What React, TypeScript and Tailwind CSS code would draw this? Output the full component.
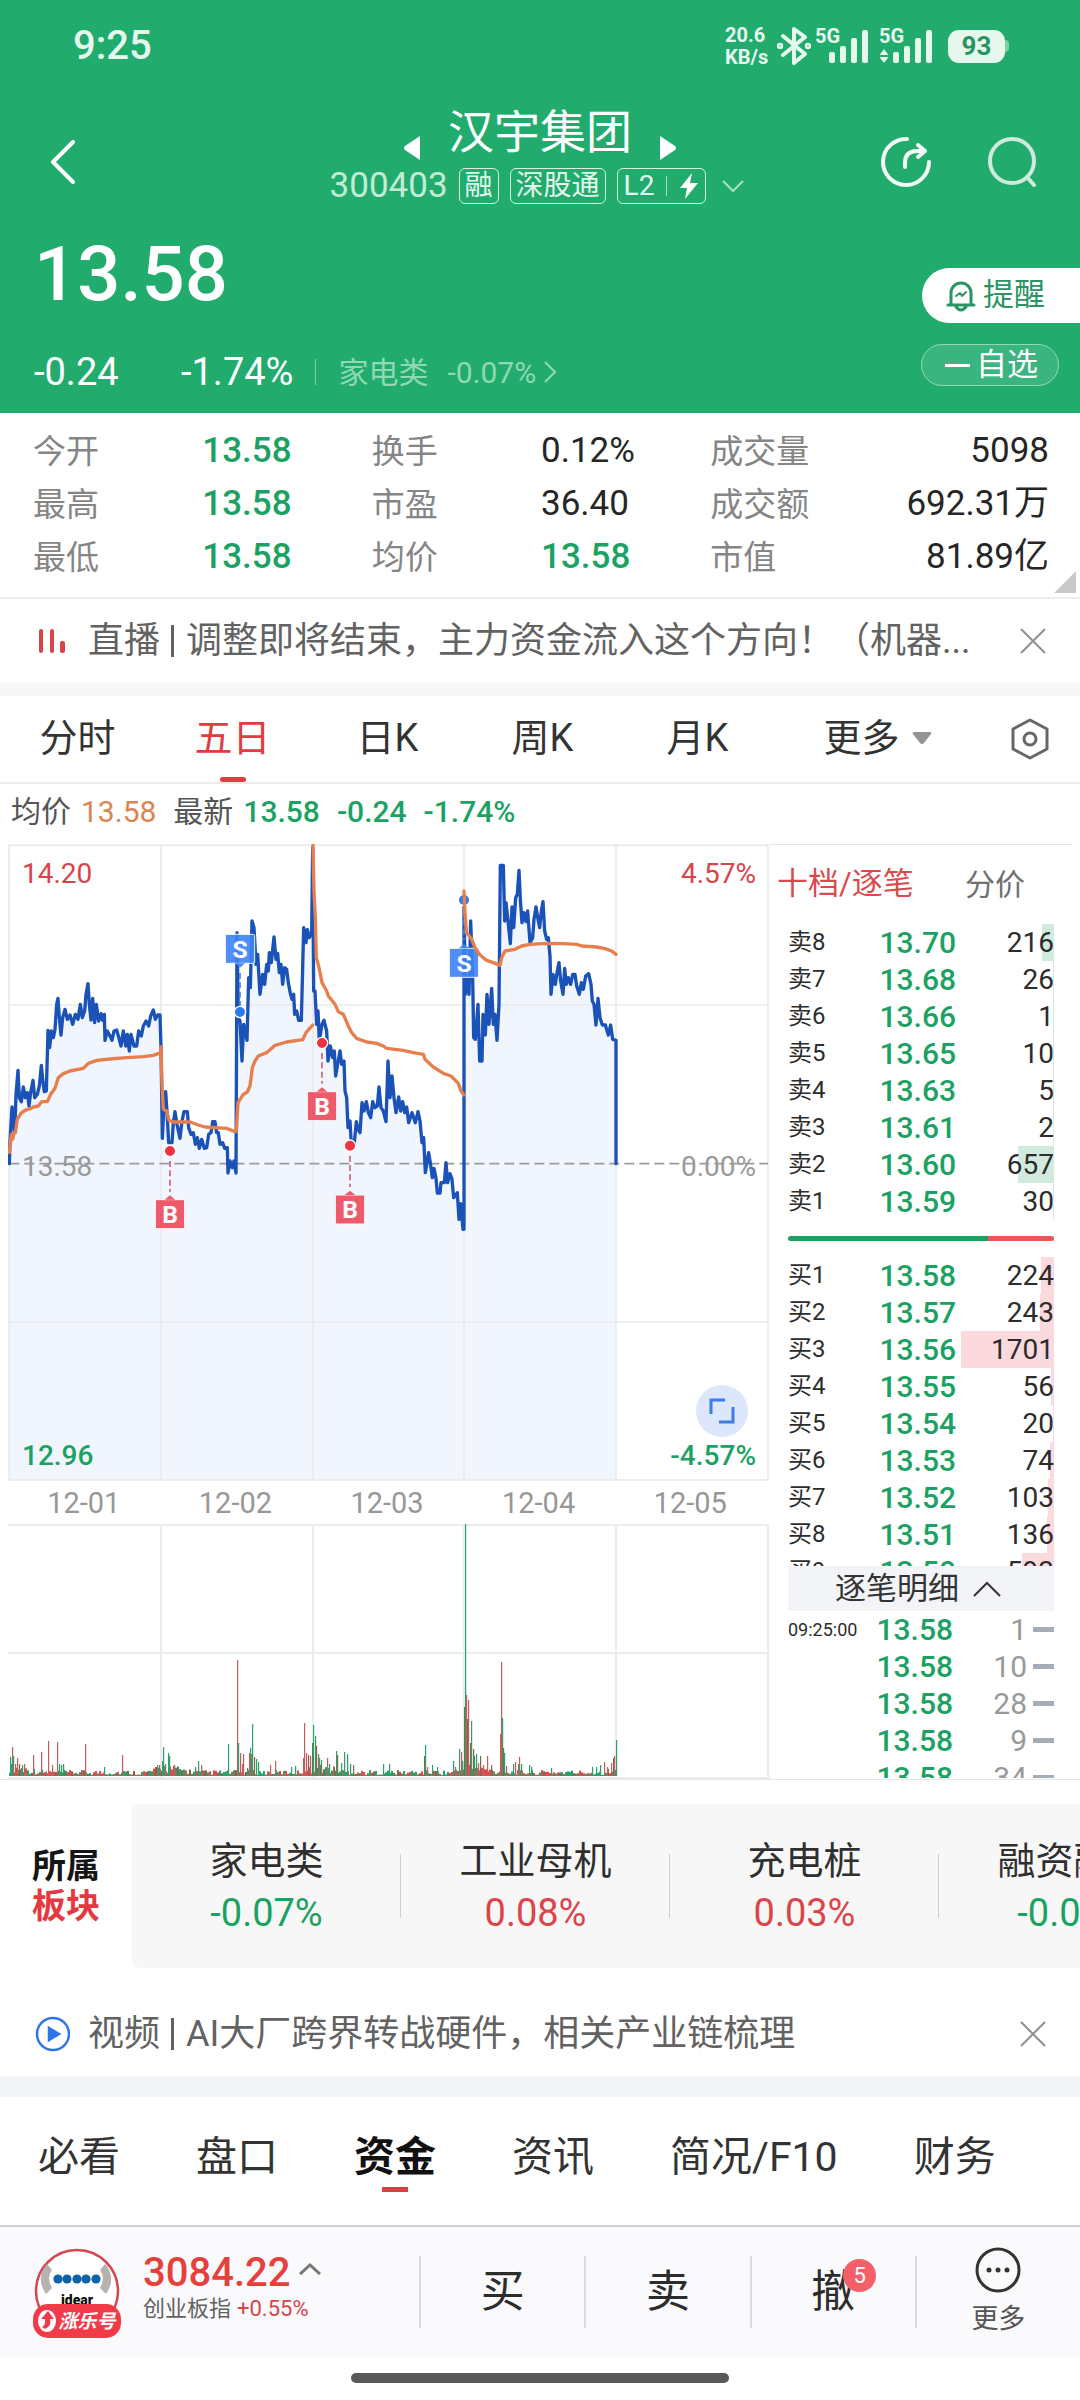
import React from "react";

const PRICE_DAYS =
  "28,998 30,930 36,828 40,880 44,905 48,790 54,718 58,800 64,812 70,768 76,800 82,785 87,825 92,785 99,748 104,800 112,790 118,765 124,703 128,745 133,782 139,780 144,598 149,650 154,600 160,620 165,595 170,520 174,502 178,560 183,612 188,560 195,535 202,565 210,552 218,580 226,550 234,565 241,520 247,560 254,540 258,490 264,458 268,520 273,567 278,502 284,575 289,520 296,570 303,548 308,568 313,550 315,628 322,600 330,615 336,628 342,600 350,597 356,618 363,645 370,600 377,645 382,610 388,660 393,610 402,645 410,645 416,600 424,615 430,585 438,570 446,585 452,555 460,537 466,565 473,552 480,552 483,650 487,922 492,820 497,782 502,860 506,935 516,935 520,875 525,842 531,880 540,922 546,870 552,842 562,842 566,890 573,910 580,905 586,940 592,920 598,952 605,925 613,952 620,950 626,910 633,905 638,872 645,872 650,905 655,905 660,940 668,935 674,952 682,950 684,1026 690,990 697,1010 702,990 708,1026 711,305 715,560 720,570 726,690 731,580 736,600 741,628 746,440 751,470 756,270 762,290 768,400 773,370 780,490 788,430 794,460 800,400 805,420 808,365 814,395 822,318 828,385 833,367 838,425 843,400 848,460 854,410 860,415 865,455 871,487 876,505 881,490 884,550 890,540 896,568 904,568 911,290 918,335 922,295 928,320 935,305 938,50 941,480 945,480 950,580 954,540 958,630 966,580 972,568 980,600 984,690 991,645 998,680 1003,660 1007,735 1013,700 1020,660 1025,700 1032,690 1035,780 1040,800 1044,890 1050,870 1054,940 1062,945 1069,872 1074,895 1080,905 1086,815 1092,840 1099,812 1105,845 1112,860 1118,812 1125,830 1132,825 1137,768 1143,830 1150,840 1158,872 1164,690 1170,800 1176,735 1182,800 1188,845 1196,798 1202,840 1208,812 1214,845 1220,828 1226,875 1236,845 1246,875 1254,842 1260,870 1266,935 1271,920 1276,1025 1286,965 1291,995 1297,1040 1302,1012 1308,1042 1312,1086 1320,1086 1323,1055 1333,1055 1338,995 1343,1055 1350,1028 1356,1045 1361,1100 1372,1085 1377,1165 1382,1118 1389,1195 1392,1195 1392,210 1396,490 1402,440 1407,490 1412,270 1418,440 1421,620 1426,625 1434,520 1439,690 1446,690 1449,550 1456,612 1461,490 1467,580 1475,472 1480,580 1485,550 1491,628 1497,520 1501,103 1510,103 1514,270 1518,215 1524,270 1531,338 1536,228 1541,290 1547,200 1552,190 1557,118 1561,205 1566,275 1572,245 1578,272 1583,240 1590,335 1598,320 1602,265 1608,228 1614,265 1619,290 1624,240 1629,212 1634,300 1640,325 1645,320 1650,375 1653,490 1659,430 1666,460 1671,425 1677,395 1682,450 1689,490 1694,412 1699,460 1705,440 1712,460 1718,430 1725,430 1730,465 1738,490 1744,455 1750,475 1757,435 1766,428 1773,460 1777,510 1782,520 1788,582 1794,502 1800,560 1807,582 1816,582 1825,612 1832,582 1838,625 1848,628 1848,998";

const AVERAGE_LINES = [
  "28,965 34,910 38,925 42,905 46,905 52,865 62,848 75,838 90,833 100,828 115,825 125,812 142,812 152,790 165,772 175,740 190,728 210,720 250,712 265,697 290,688 330,684 380,680 430,677 460,673 483,665 483,648 486,760 490,835 500,840 507,868 520,873 570,873 595,882 615,888 680,892 700,900 709,902 714,815 730,790 742,783 750,765 757,710 765,690 775,675 800,665 825,643 860,633 908,626 918,605 938,582",
  "939,42 942,180 946,260 949,380 956,405 966,455 980,480 985,495 1005,520 1015,542 1030,550 1045,585 1055,605 1070,622 1100,633 1130,637 1150,645 1160,652 1210,658 1240,665 1270,670 1275,685 1300,708 1330,727 1353,735 1375,757 1383,780 1392,792",
  "1392,180 1395,250 1400,305 1415,325 1425,350 1440,372 1460,388 1480,395 1500,403 1505,380 1515,360 1545,355 1565,345 1590,340 1640,337 1690,338 1730,340 1745,345 1790,348 1815,353 1835,360 1848,370",
];

const RED = "#c65a5c";
const GREEN = "#27a26b";
const MUD = "#7d6a4a";

const VOLUME_PEAKS: [number, number, string][] = [
  [10, 19, GREEN], [12, 29, RED], [13, 20, GREEN], [15, 12, RED], [17, 18, RED], [19, 12, MUD], [22, 11, GREEN], [24, 12, RED],
  [33, 21, RED], [41, 24, RED], [48, 35, RED], [52, 11, RED], [57, 34, RED], [59, 12, GREEN], [61, 11, GREEN], [63, 12, GREEN],
  [85, 32, RED], [104, 9, GREEN], [122, 21, RED], [157, 11, RED], [159, 11, GREEN], [162, 15, GREEN], [163, 29, GREEN],
  [165, 12, RED], [168, 23, GREEN], [169, 20, GREEN], [174, 11, RED], [195, 9, GREEN], [198, 15, GREEN], [201, 11, RED],
  [228, 32, GREEN], [237, 116, RED], [238, 33, GREEN], [240, 23, RED], [242, 12, RED], [243, 22, RED], [247, 8, GREEN],
  [249, 23, RED], [250, 28, GREEN], [251, 22, RED], [252, 52, GREEN], [254, 19, MUD], [256, 17, GREEN], [258, 14, GREEN],
  [270, 11, RED], [275, 15, RED], [291, 9, GREEN], [295, 10, GREEN], [303, 18, RED], [304, 53, RED], [306, 23, RED],
  [308, 21, MUD], [310, 20, RED], [312, 33, MUD], [313, 51, GREEN], [315, 40, GREEN], [316, 30, MUD], [318, 22, GREEN],
  [319, 18, RED], [321, 16, GREEN], [327, 18, RED], [329, 12, GREEN], [333, 10, RED], [336, 25, GREEN], [337, 21, MUD],
  [341, 13, GREEN], [344, 24, GREEN], [347, 22, GREEN], [350, 12, GREEN], [353, 11, MUD], [383, 12, GREEN], [389, 12, GREEN],
  [424, 20, MUD], [425, 31, GREEN], [427, 9, RED], [432, 11, GREEN], [437, 9, GREEN], [453, 15, GREEN], [455, 9, RED],
  [459, 27, GREEN], [461, 24, RED], [462, 15, GREEN], [464, 69, MUD], [465, 252, GREEN], [466, 81, RED], [467, 57, MUD],
  [468, 76, RED], [470, 33, MUD], [471, 55, GREEN], [473, 27, MUD], [474, 20, GREEN], [476, 22, GREEN], [478, 13, RED],
  [480, 20, MUD], [483, 11, RED], [487, 20, RED], [491, 11, MUD], [500, 42, RED], [501, 114, RED], [502, 58, GREEN],
  [503, 28, MUD], [504, 23, GREEN], [506, 10, RED], [513, 12, GREEN], [515, 14, RED], [518, 12, GREEN], [519, 19, RED],
  [521, 12, GREEN], [529, 11, GREEN], [531, 9, GREEN], [551, 8, GREEN], [592, 9, GREEN], [596, 9, GREEN], [600, 11, GREEN],
  [604, 14, RED], [607, 9, RED], [611, 13, RED], [613, 18, MUD], [614, 20, RED], [616, 36, GREEN],
];

const VOLUME_FLOOR: [number, number, string][] = Array.from({ length: 304 }, (_, i) => {
  const inDay = i % 76;
  const noise = Math.abs(Math.sin(i * 12.9898) * 43758.5453) % 1;
  const tone = Math.abs(Math.sin(i * 78.233) * 12543.123) % 1;
  const swell = inDay < 18 ? (18 - inDay) / 2.4 : inDay > 68 ? (inDay - 68) / 1.6 : 0;
  return [9 + i * 2, 1 + noise * 5 + swell * (0.3 + noise * 0.7), tone < 0.45 ? GREEN : tone < 0.85 ? "#e04a4e" : MUD];
});

type Marker = { x: number; dot: number; top: number; kind: "B" | "S" };
const MARKERS: Marker[] = [
  { x: 510, dot: 960, top: 1106, kind: "B" },
  { x: 966, dot: 636, top: 782, kind: "B" },
  { x: 1050, dot: 944, top: 1092, kind: "B" },
  { x: 720, dot: 543, top: 310, kind: "S" },
  { x: 1392, dot: 207, top: 352, kind: "S" },
];

function TradeMarker({ x, dot, top, kind }: Marker) {
  const above = dot > top;
  const fill = kind === "B" ? "#ef4a5a" : "#3f83f8";
  const tip = above
    ? `M${x - 16} ${top + 87}L${x} ${top + 100}L${x + 16} ${top + 87}Z`
    : `M${x - 16} ${top}L${x} ${top - 13}L${x + 16} ${top}Z`;
  return (
    <g>
      <line
        x1={x}
        x2={x}
        y1={above ? top + 116 : dot + 30}
        y2={above ? dot - 10 : top - 24}
        stroke={kind === "B" ? "#cf6277" : "#4d7fd6"}
        strokeWidth="5"
        strokeDasharray="18 10"
      />
      <circle cx={x} cy={dot} r="17" fill={kind === "B" ? "#ef3340" : "#2b7bf3"} stroke="#fff" strokeWidth="4" />
      <g opacity="0.9">
        <rect x={x - 44} y={top} width="88" height="87" rx="4" fill={fill} stroke="#fff" strokeWidth="3" />
        <path d={tip} fill={fill} />
      </g>
      <text x={x} y={top + 70} textAnchor="middle" fontSize="74" fontWeight="700" fill="#fff">
        {kind}
      </text>
    </g>
  );
}

function PriceChart() {
  return (
    <svg viewBox="24 39 2286 1914" className="block h-auto w-full" aria-label="五日走势">
      <polygon points={`28,1947 ${PRICE_DAYS} 1848,1947`} fill="#f0f5fe" />
      <g stroke="#e9eaee" strokeWidth="5" fill="none">
        <rect x="27" y="43" width="2277" height="1904" />
        <path d="M27 522H2304M27 1473H2304M483 43V1947M939 43V1947M1392 43V1947M1848 43V1947" />
      </g>
      <path d="M28 998H2304" stroke="#999c9f" strokeWidth="5" strokeDasharray="30 15" />
      <polyline points={PRICE_DAYS} fill="none" stroke="#1a52b8" strokeWidth="10" strokeLinejoin="round" strokeLinecap="round" />
      {MARKERS.map((m) => (
        <TradeMarker key={`${m.x}`} {...m} />
      ))}
      {AVERAGE_LINES.map((points) => (
        <polyline key={points} points={points} fill="none" stroke="#e67f4d" strokeWidth="10" strokeLinejoin="round" strokeLinecap="round" />
      ))}
    </svg>
  );
}

function VolumeChart() {
  return (
    <svg viewBox="8 1523 762 255" className="block h-auto w-full" aria-label="成交量">
      <g stroke="#ececef" strokeWidth="2">
        <path d="M8 1524H769M8 1652H769M161 1523V1777M313 1523V1777M464 1523V1777M616 1523V1777M768 1523V1777" />
        <path d="M8 1777H770" />
      </g>
      {[...VOLUME_FLOOR, ...VOLUME_PEAKS].map(([x, h, color], i) => (
        <rect key={i} x={x} y={1775 - h} width={i < 304 ? 2 : 1.2} height={h} fill={color} />
      ))}
    </svg>
  );
}

function SignalBars({ data }: { data?: boolean }) {
  return (
    <svg viewBox="0 0 54 38" className="h-[38px] w-[54px] overflow-visible" fill="#e6f8ee">
      <text x="0" y="16" fontSize="20" fontWeight="700">
        5G
      </text>
      <rect x="14" y="25" width="6" height="11" rx="2" />
      <rect x="25" y="19" width="6" height="17" rx="2" />
      <rect x="36" y="11" width="6" height="25" rx="2" />
      <rect x="47" y="3" width="6" height="33" rx="2" />
      {data && <path d="M5 22l4.500 6h-9zM5 36l4.500-6h-9z" />}
    </svg>
  );
}

function StatusBar() {
  return (
    <div className="flex h-[92px] items-center justify-between pr-[71px] pl-[73px] text-[#e6f8ee]">
      <span className="text-[40px] font-medium">9:25</span>
      <div className="flex items-center">
        <div className="w-[52px] text-[20px] leading-[22px] font-bold">
          <div>20.6</div>
          <div>KB/s</div>
        </div>
        <svg viewBox="0 0 34 38" className="mr-1 h-[38px] w-[34px]" fill="none" stroke="#e6f8ee" strokeWidth="4" strokeLinejoin="round" strokeLinecap="round">
          <path d="M6 9l22 18-11 9V2l11 8L6 28" />
          <circle cx="3" cy="19" r="1.200" />
          <circle cx="31" cy="19" r="1.200" />
        </svg>
        <SignalBars />
        <span className="w-[10px]" />
        <SignalBars data />
        <div className="ml-[15px] flex h-[33px] w-[57px] items-center justify-center rounded-[11px] bg-[#e6f8ee] text-[26px] font-bold text-[#279463]">
          93
        </div>
        <span className="h-3 w-1 rounded-r bg-[#7dcfa6]" />
      </div>
    </div>
  );
}

function Header() {
  return (
    <header className="bg-[#21ac6e] text-white">
      <StatusBar />
      <div className="grid h-[140px] grid-cols-[1fr_auto_1fr] items-center">
        <button aria-label="返回" className="justify-self-start pl-[50px]">
          <svg viewBox="0 0 26 44" className="h-11 w-[26px]" fill="none" stroke="#fff" strokeWidth="4" strokeLinecap="round" strokeLinejoin="round">
            <path d="M23 2L3 22l20 20" />
          </svg>
        </button>
        <div className="flex flex-col items-center self-start pt-3">
          <div className="flex items-center gap-7">
            <button aria-label="上一只" className="pt-8">
              <svg viewBox="0 0 16 24" className="h-6 w-4" fill="#fff">
                <path d="M16 0v24L1 14q-2-2 0-4z" />
              </svg>
            </button>
            <h1 className="text-[46px] leading-[54px]">汉宇集团</h1>
            <button aria-label="下一只" className="pt-8">
              <svg viewBox="0 0 16 24" className="h-6 w-4" fill="#fff">
                <path d="M0 0v24l15-10q2-2 0-4z" />
              </svg>
            </button>
          </div>
          <div className="mt-2 mr-1.5 flex h-9 items-center text-[28px] text-[#e4f7ed]">
            <span className="mr-[11px] text-[35px] text-[#c3ebd6]">300403</span>
            <span className="mr-[11px] flex h-9 items-center rounded-md border border-[#d5f2e3] px-[5px]">融</span>
            <span className="mr-[11px] flex h-9 items-center rounded-md border border-[#d5f2e3] px-[5px]">深股通</span>
            <span className="flex h-9 items-center rounded-md border border-[#d5f2e3] px-[6px]">
              L2
              <i className="mx-3 h-5 w-px bg-[#a4dfc2]" />
              <svg viewBox="0 0 20 26" className="h-[26px] w-5" fill="#fff">
                <path d="M13 0L1 15h7L6 26l13-16h-8z" />
              </svg>
            </span>
            <svg viewBox="0 0 22 12" className="ml-4 h-3 w-[22px]" fill="none" stroke="#a5e0c3" strokeWidth="2">
              <path d="M1 1l10 10L21 1" />
            </svg>
          </div>
        </div>
        <div className="flex items-center justify-self-end pr-[43px]">
          <button aria-label="分享" className="mr-[55px]">
            <svg viewBox="0 0 52 52" className="h-[52px] w-[52px]" fill="none" stroke="#f2fbf6" strokeWidth="4" strokeLinecap="round" strokeLinejoin="round">
              <path d="M27 3A23 23 0 1 0 49 26" />
              <path d="M25 31v-4q0-12 12-12h8M38 9l7 6-7 6" />
            </svg>
          </button>
          <button aria-label="搜索">
            <svg viewBox="0 0 50 50" className="h-[50px] w-[50px]" fill="none" stroke="#cfe9dc" strokeWidth="4" strokeLinecap="round">
              <circle cx="25" cy="24" r="22" />
              <path d="M40 40l7 8" />
            </svg>
          </button>
        </div>
      </div>
      <div className="flex justify-between">
        <div className="pb-[13px] pl-[34px]">
          <div className="text-[76px] leading-[84px] font-medium">13.58</div>
          <div className="mt-7 flex h-14 items-center text-[38px]">
            <span className="w-[147px]">-0.24</span>
            <span>-1.74%</span>
            <i className="mx-[22px] h-[26px] w-px bg-[#7fd0a8]" />
            <a href="#sector" className="flex items-center text-[30px] text-[#8fd8b3]">
              家电类
              <span className="ml-[19px]">-0.07%</span>
              <svg viewBox="0 0 12 22" className="ml-2 h-[22px] w-3" fill="none" stroke="#8fd8b3" strokeWidth="2">
                <path d="M1 1l10 10L1 21" />
              </svg>
            </a>
          </div>
        </div>
        <div className="flex flex-col items-end pt-9">
          <button className="flex h-[55px] w-[158px] items-center rounded-l-full bg-white pl-6 text-[31px] text-[#2a9464]">
            <svg viewBox="0 0 30 32" className="mr-[7px] h-8 w-[30px]" fill="none" stroke="#2a9464" strokeWidth="3" strokeLinecap="round" strokeLinejoin="round">
              <path d="M5 24V13a10 10 0 0 1 20 0v11M2 25h26M10 27q5 6 10 0" />
              <path d="M10 16l4-3 2 3 4-4" strokeWidth="2" />
            </svg>
            提醒
          </button>
          <button className="mt-[21px] mr-[21px] flex h-[42px] w-[138px] items-center rounded-full border border-[#90d8b4] bg-[#3bb57f] pl-[23px] text-[31px]">
            <i className="mr-1.5 h-[3px] w-[25px] bg-white" />
            自选
          </button>
        </div>
      </div>
    </header>
  );
}

const STATS = [
  ["今开", "13.58", "换手", "0.12%", "成交量", "5098"],
  ["最高", "13.58", "市盈", "36.40", "成交额", "692.31万"],
  ["最低", "13.58", "均价", "13.58", "市值", "81.89亿"],
];

function Stats() {
  return (
    <section className="relative border-b-2 border-[#ededed] pt-3 pr-[31px] pb-[13px] pl-[33px]">
      <table className="w-full table-fixed">
        <tbody>
          {STATS.map((row) => (
            <tr key={row[0]} className="h-[53px] text-[35px]">
              {row.map((cell, i) =>
                i % 2 === 0 ? (
                  <th key={i} scope="row" className="p-0 text-left text-[33px] font-normal text-[#858585]">
                    {cell}
                  </th>
                ) : (
                  <td
                    key={i}
                    className={`${i === 5 ? "text-right" : "text-left"} p-0 whitespace-nowrap ${
                      cell === "13.58" ? "font-medium text-[#1ba263]" : "text-[#262626]"
                    }`}
                  >
                    {cell}
                  </td>
                )
              )}
            </tr>
          ))}
        </tbody>
      </table>
      <svg viewBox="0 0 22 22" className="absolute right-1 bottom-1 h-[22px] w-[22px]" fill="#c9c9c9">
        <path d="M22 0v22H0z" />
      </svg>
    </section>
  );
}

function CloseButton() {
  return (
    <button aria-label="关闭" className="mr-[34px] ml-auto">
      <svg viewBox="0 0 26 26" className="h-[26px] w-[26px]" fill="none" stroke="#8f8f8f" strokeWidth="2">
        <path d="M1 1l24 24M25 1L1 25" />
      </svg>
    </button>
  );
}

function Notice({ icon, kind, text }: { icon: React.ReactNode; kind: string; text: string }) {
  return (
    <div className="flex h-[84px] items-center pl-[34px]">
      <span className="flex w-[54px] shrink-0 items-center">{icon}</span>
      <a href="#notice" className="flex min-w-0 items-center text-[36px] text-[#626262]">
        <span className="shrink-0">{kind}</span>
        <i className="mr-3 ml-[11px] h-8 w-[3px] shrink-0 bg-[#626262]" />
        <span className="overflow-hidden whitespace-nowrap">{text}</span>
      </a>
      <CloseButton />
    </div>
  );
}

const PERIODS = ["分时", "五日", "日K", "周K", "月K"];

function PeriodTabs() {
  return (
    <nav className="grid h-[88px] grid-cols-[repeat(5,155fr)_205fr_100fr] border-b-2 border-[#ececec] text-[38px] text-[#333]">
      {PERIODS.map((p) => (
        <button key={p} className={`relative pb-0.5 ${p === "五日" ? "text-[#e33b42]" : ""}`}>
          {p}
          {p === "五日" && <i className="absolute bottom-0 left-1/2 h-[5px] w-[26px] -translate-x-1/2 rounded-full bg-[#e33b42]" />}
        </button>
      ))}
      <button className="flex items-center justify-center gap-3 pb-0.5">
        更多
        <svg viewBox="0 0 20 12" className="h-3 w-5" fill="#949494">
          <path d="M2 0h16q2 0 1 2l-7 9q-2 2-4 0L1 2Q0 0 2 0z" />
        </svg>
      </button>
      <button aria-label="设置" className="flex items-center justify-center">
        <svg viewBox="0 0 40 42" className="h-[42px] w-10" fill="none" stroke="#666" strokeWidth="3" strokeLinejoin="round">
          <path d="M20 2l17 9v20l-17 9-17-9V11z" />
          <circle cx="20" cy="21" r="6" />
        </svg>
      </button>
    </nav>
  );
}

const ASKS: [string, string, string, number][] = [
  ["卖8", "13.70", "216", 12],
  ["卖7", "13.68", "26", 1],
  ["卖6", "13.66", "1", 1],
  ["卖5", "13.65", "10", 1],
  ["卖4", "13.63", "5", 1],
  ["卖3", "13.61", "2", 1],
  ["卖2", "13.60", "657", 36],
  ["卖1", "13.59", "30", 1],
];
const BIDS: [string, string, string, number][] = [
  ["买1", "13.58", "224", 13],
  ["买2", "13.57", "243", 14],
  ["买3", "13.56", "1701", 93],
  ["买4", "13.55", "56", 3],
  ["买5", "13.54", "20", 1],
  ["买6", "13.53", "74", 4],
  ["买7", "13.52", "103", 6],
  ["买8", "13.51", "136", 7],
  ["买9", "13.50", "593", 32],
];
const TICKS = [
  ["09:25:00", "1"],
  ["", "10"],
  ["", "28"],
  ["", "9"],
  ["", "34"],
];

function Depth({ rows, bar }: { rows: [string, string, string, number][]; bar: string }) {
  return (
    <table className="w-full table-fixed">
      <tbody>
        {rows.map(([label, price, qty, width]) => (
          <tr key={label} className="h-[37px] leading-[37px]">
            <th scope="row" className="w-[60px] p-0 text-left text-[24px] font-normal text-[#2c2c2c]">
              {label}
            </th>
            <td className="w-[108px] p-0 text-right text-[30px] font-medium text-[#1ba263]">{price}</td>
            <td className="relative p-0 text-right text-[28px] text-[#2c2c2c]">
              <i className={`absolute inset-y-0 right-0 ${bar}`} style={{ width }} />
              <span className="relative">{qty}</span>
            </td>
          </tr>
        ))}
      </tbody>
    </table>
  );
}

function OrderBook() {
  return (
    <aside className="flex w-[310px] shrink-0 flex-col">
      <div className="mr-2 flex h-20 items-center justify-between border-t border-[#e6e6e6] pr-[47px] pl-[7px] text-[31px]">
        <button className="text-[#d94a4d]">十档/逐笔</button>
        <button className="text-[30px] text-[#707070]">分价</button>
      </div>
      <div className="pr-[26px] pl-[18px]">
        <Depth rows={ASKS} bar="bg-[#d0ebde]" />
        <div className="my-4 flex h-[5px] overflow-hidden rounded-full">
          <i className="w-3/4 bg-[#1ba263]" />
          <i className="flex-1 bg-[#ec5559]" />
        </div>
        <div className="h-[309px] overflow-hidden">
          <Depth rows={BIDS} bar="bg-[#fcd9dc]" />
        </div>
        <button className="flex h-[45px] w-full items-center justify-center gap-[14px] bg-[#f3f4f8] pr-1.5 text-[31px] leading-9 text-[#333]">
          逐笔明细
          <svg viewBox="0 0 28 16" className="h-4 w-7" fill="none" stroke="#333" strokeWidth="2">
            <path d="M1 15L14 2l13 13" />
          </svg>
        </button>
        <div className="h-[167px] overflow-hidden">
          <table className="w-full table-fixed">
            <tbody>
              {TICKS.map(([time, qty], i) => (
                <tr key={i} className="h-[37px] leading-[37px]">
                  <td className="w-[76px] p-0 text-[18px] text-[#2c2c2c]">{time}</td>
                  <td className="w-[89px] p-0 text-right text-[30px] font-medium text-[#1ba263]">13.58</td>
                  <td className="p-0 text-[30px] text-[#999]">
                    <span className="flex items-center justify-end gap-[6px]">
                      {qty}
                      <i className="h-[5px] w-[21px] bg-[#a4adb7]" />
                    </span>
                  </td>
                </tr>
              ))}
            </tbody>
          </table>
        </div>
      </div>
    </aside>
  );
}

function Charts() {
  return (
    <section className="flex border-b border-[#e6e6e6]">
      <div className="min-w-0 flex-1 pl-2">
        <div className="relative text-[28px] leading-8">
          <PriceChart />
          <span className="absolute top-[14px] left-[14px] text-[#d9434a]">14.20</span>
          <span className="absolute top-[14px] right-[14px] text-[#d9434a]">4.57%</span>
          <span className="absolute top-1/2 left-[14px] mt-1 -translate-y-1/2 text-[#999]">13.58</span>
          <span className="absolute top-1/2 right-[14px] mt-1 -translate-y-1/2 text-[#999]">0.00%</span>
          <span className="absolute bottom-[10px] left-[14px] font-medium text-[#1ba263]">12.96</span>
          <span className="absolute right-[14px] bottom-[10px] font-medium text-[#1ba263]">-4.57%</span>
          <button aria-label="全屏" className="absolute right-[22px] bottom-[45px] flex h-[52px] w-[52px] items-center justify-center rounded-full bg-[#dde7fc]">
            <svg viewBox="0 0 26 26" className="h-[26px] w-[26px]" fill="none" stroke="#3d7de6" strokeWidth="3">
              <path d="M2 16V2h14M24 9v15H10" />
            </svg>
          </button>
        </div>
        <div className="grid h-[42px] grid-cols-5 items-center pr-1 text-center text-[29px] text-[#979797]">
          {["12-01", "12-02", "12-03", "12-04", "12-05"].map((d) => (
            <span key={d}>{d}</span>
          ))}
        </div>
        <VolumeChart />
      </div>
      <OrderBook />
    </section>
  );
}

const SECTORS = [
  ["家电类", "-0.07%"],
  ["工业母机", "0.08%"],
  ["充电桩", "0.03%"],
  ["融资融券", "-0.05%"],
];

function Sectors() {
  return (
    <section id="sector" className="mt-6 flex items-stretch">
      <h2 className="flex w-[132px] shrink-0 flex-col items-center justify-center text-[34px] leading-10 font-bold text-[#151515]">
        所属<span className="text-[#e8383f]">板块</span>
      </h2>
      <div className="flex h-[164px] min-w-0 flex-1 items-center overflow-hidden rounded-l-lg bg-[#f7f7f7]">
        {SECTORS.map(([name, change]) => (
          <a key={name} href="#sector" className="relative w-[269px] shrink-0 text-center">
            <span className="block text-[38px] leading-[54px] text-[#2f2f2f]">{name}</span>
            <span className={`block text-[38px] leading-[50px] ${change.startsWith("-") ? "text-[#1ba263]" : "text-[#dd444a]"}`}>{change}</span>
            <i className="absolute top-5 right-0 h-16 w-px bg-[#cfcfcf]" />
          </a>
        ))}
      </div>
    </section>
  );
}

const SECTIONS = ["必看", "盘口", "资金", "资讯", "简况/F10", "财务"];

function SectionTabs() {
  return (
    <nav className="flex h-[128px] items-start gap-[76px] pt-[31px] pl-[38px] text-[41px] leading-[58px] text-[#333]">
      {SECTIONS.map((s) => (
        <button key={s} className={`relative shrink-0 ${s === "资金" ? "font-bold text-[#111]" : ""}`}>
          {s}
          {s === "资金" && <i className="absolute -bottom-1.5 left-1/2 h-[5px] w-[26px] -translate-x-1/2 bg-[#e33b42]" />}
        </button>
      ))}
    </nav>
  );
}

function Logo() {
  return (
    <svg viewBox="0 0 90 92" className="h-[92px] w-[90px]" aria-label="涨乐号">
      <circle cx="45" cy="43" r="41" fill="#fff" stroke="#d64550" strokeWidth="2.500" />
      <path d="M15 16Q3 30 14 46L20 40Q14 30 20 22z" fill="#b5b2b0" />
      <path d="M73 16Q85 30 74 46L68 40Q74 30 68 22z" fill="#b5b2b0" />
      {[26, 35, 45, 54, 64].map((x) => (
        <circle key={x} cx={x} cy="31" r="4.600" fill="#0d62a8" />
      ))}
      <text x="45" y="57" textAnchor="middle" fontSize="14" fontWeight="900" fill="#111">
        idear
      </text>
      <rect x="1" y="56" width="88" height="34" rx="15" fill="#f23b48" />
      <ellipse cx="15" cy="73" rx="9" ry="11" fill="#fff" />
      <path d="M13 81q7-3 5-10h4l-6-8-7 8h4q1 6-3 8z" fill="#f23b48" />
      <text x="55" y="80" textAnchor="middle" fontSize="19" fontWeight="700" fontStyle="italic" fill="#fff">
        涨乐号
      </text>
    </svg>
  );
}

function BottomBar() {
  const action = "flex flex-1 items-center justify-center border-l-2 border-[#dcdce0]";
  return (
    <footer>
      <div className="flex h-[132px] items-center border-t-2 border-[#d0d2d5] bg-[#fafafc] pl-8">
        <a href="#account" className="mt-1">
          <Logo />
        </a>
        <div className="ml-[21px] flex-1">
          <button className="flex items-center text-[40px] leading-10 font-medium text-[#e5403c]">
            3084.22
            <svg viewBox="0 0 22 12" className="mb-2 ml-2 h-3 w-[22px]" fill="none" stroke="#777" strokeWidth="3">
              <path d="M1 11L11 2l10 9" />
            </svg>
          </button>
          <div className="mb-1.5 flex items-center text-[22px] leading-8 text-[#626262]">
            创业板指<span className="ml-1.5 text-[#d9434a]">+0.55%</span>
          </div>
        </div>
        <div className="flex h-[72px] w-[661px] text-[44px] text-[#2c2c2c]">
          <button className={action}>买</button>
          <button className={action}>卖</button>
          <button className={action}>
            <span className="relative">
              撤
              <b className="absolute top-0 left-8 flex h-[33px] w-[33px] items-center justify-center rounded-full bg-[#f4606a] text-[22px] font-normal text-white">
                5
              </b>
            </span>
          </button>
          <button className={`${action} flex-col text-[27px] leading-9 text-[#555]`}>
            <svg viewBox="0 0 46 46" className="h-[46px] w-[46px] shrink-0" fill="none" stroke="#333" strokeWidth="3">
              <circle cx="23" cy="23" r="21" />
              <g fill="#333" stroke="none">
                <circle cx="14" cy="23" r="2.500" />
                <circle cx="23" cy="23" r="2.500" />
                <circle cx="32" cy="23" r="2.500" />
              </g>
            </svg>
            <span className="mt-2">更多</span>
          </button>
        </div>
      </div>
      <div className="flex h-[42px] items-center justify-center bg-white pb-px">
        <i className="h-2.5 w-[35%] rounded-full bg-[#595959]" />
      </div>
    </footer>
  );
}

export default function App() {
  return (
    <main className="flex min-h-screen flex-col overflow-x-hidden bg-white [font-family:Roboto,'Noto_Sans_CJK_SC',sans-serif]">
      <Header />
      <Stats />
      <Notice
        kind="直播"
        text="调整即将结束，主力资金流入这个方向！（机器..."
        icon={
          <svg viewBox="0 0 28 26" className="ml-1 h-[26px] w-7" fill="#d9434a">
            <rect x="1" y="1" width="4" height="24" rx="2" />
            <rect x="12" y="1" width="4" height="24" rx="2" />
            <rect x="22" y="13" width="5" height="12" rx="2" />
          </svg>
        }
      />
      <div className="h-[13px] bg-[#f7f7f7]" />
      <PeriodTabs />
      <div className="flex h-[60px] items-center pb-[6px] pl-[11px] text-[30px] text-[#555]">
        均价<span className="ml-[10px] text-[#dc8450]">13.58</span>
        <span className="ml-[17px]">最新</span>
        <span className="ml-[10px] font-medium text-[#1ba263]">13.58</span>
        <span className="ml-[17px] font-medium text-[#1ba263]">-0.24</span>
        <span className="ml-[17px] font-medium text-[#1ba263]">-1.74%</span>
      </div>
      <Charts />
      <Sectors />
      <div className="mt-6">
        <Notice
          kind="视频"
          text="AI大厂跨界转战硬件，相关产业链梳理"
          icon={
            <svg viewBox="0 0 36 36" className="h-9 w-9" fill="none" stroke="#2f74e8" strokeWidth="2.500">
              <circle cx="19" cy="18" r="16" />
              <path d="M15 12l10 6-10 6z" fill="#2f74e8" />
            </svg>
          }
        />
      </div>
      <div className="h-[21px] bg-[#f3f4f8]" />
      <SectionTabs />
      <BottomBar />
    </main>
  );
}
